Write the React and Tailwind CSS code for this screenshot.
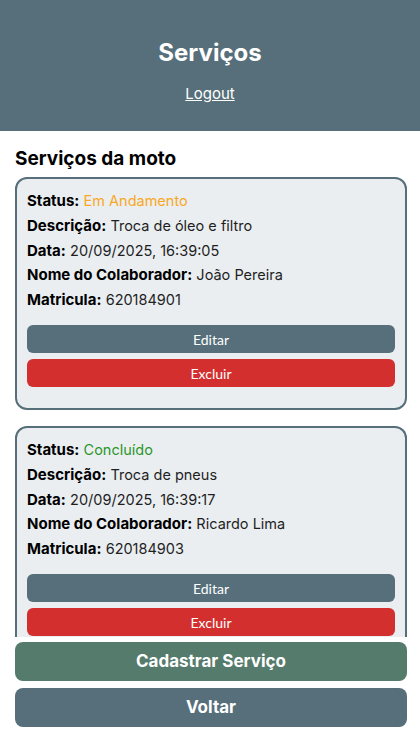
import React from "react";

const services = [
  {
    id: 1,
    status: "Em Andamento",
    descricao: "Troca de óleo e filtro",
    data: "20/09/2025, 16:39:05",
    colaborador: "João Pereira",
    matricula: "620184901",
  },
  {
    id: 2,
    status: "Concluído",
    descricao: "Troca de pneus",
    data: "20/09/2025, 16:39:17",
    colaborador: "Ricardo Lima",
    matricula: "620184903",
  },
];

const statusColor = (status) =>
  status === "Concluído" ? "text-[#2b962b]" : "text-[#f9a825]";

function Field({ label, children, className = "" }) {
  return (
    <p className="text-[15px] leading-[19px] mb-[5.75px] text-[#1f1f1f]">
      <span className="font-bold text-black">{label}:</span>{" "}
      <span className={`text-[14.5px] ${className}`}>{children}</span>
    </p>
  );
}

export default function App() {
  return (
    <div
      className="h-[747px] w-[420px] flex flex-col bg-white overflow-hidden"
      style={{ fontFamily: "Inter, 'DejaVu Sans', sans-serif" }}
    >
      {/* Header */}
      <header className="h-[131px] shrink-0 bg-[#566f7a] flex flex-col items-center pt-[38px]">
        <h1 className="text-[24px] leading-[30px] font-bold text-white">Serviços</h1>
        <a href="#" className="mt-[16px] text-[15px] leading-[20px] text-white underline">
          Logout
        </a>
      </header>

      {/* Lista */}
      <main className="flex-1 overflow-hidden pl-[15px] pr-[13px] pt-[16px]">
        <h2 className="text-[19px] leading-[23px] font-bold text-black mb-[7px]">Serviços da moto</h2>
        <div className="flex flex-col gap-[16px]">
          {services.map((s) => (
            <div
              key={s.id}
              className="bg-[#eaeef1] border-2 border-[#566f7a] rounded-[12px] px-[10px] pt-[12px] pb-[21px]"
            >
              <Field label="Status" className={statusColor(s.status)}>
                {s.status}
              </Field>
              <Field label="Descrição">{s.descricao}</Field>
              <Field label="Data">{s.data}</Field>
              <Field label="Nome do Colaborador">{s.colaborador}</Field>
              <Field label="Matricula">{s.matricula}</Field>
              <div
                className="mt-[16px] flex flex-col gap-[6px]"
                style={{ fontFamily: "Lato, sans-serif" }}
              >
                <button className="h-[28px] rounded-[6px] bg-[#566f7a] text-white text-[14px]">
                  Editar
                </button>
                <button className="h-[28px] rounded-[6px] bg-[#d32f2f] text-white text-[14px]">
                  Excluir
                </button>
              </div>
            </div>
          ))}
        </div>
      </main>

      {/* Rodapé */}
      <footer className="shrink-0 pl-[15px] pr-[13px] pt-[5px] pb-[20px] flex flex-col gap-[7px]">
        <button className="h-[39px] rounded-[8px] bg-[#557b6c] text-white text-[17px] font-bold">
          Cadastrar Serviço
        </button>
        <button className="h-[39px] rounded-[8px] bg-[#566f7a] text-white text-[17px] font-bold">
          Voltar
        </button>
      </footer>
    </div>
  );
}
